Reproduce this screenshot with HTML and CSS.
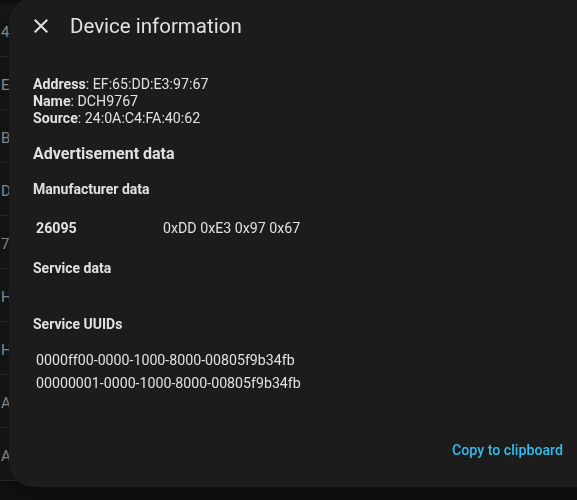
FILE: index.html
```html
<!DOCTYPE html>
<html lang="en">

<head>
    <meta charset="UTF-8">
    <meta name="viewport" content="width=device-width, initial-scale=1.0">
    <title>Device information</title>
    <link rel="stylesheet" href="styles.css">
</head>

<body>
    <div class="device-list">
        <div class="device-row">47:1C:8A:02:5E:D1</div>
        <div class="device-row">E6:02:7B:44:19:AC</div>
        <div class="device-row">B8:27:EB:11:0C:3F</div>
        <div class="device-row">D4:9A:20:6E:71:08</div>
        <div class="device-row">7C:DF:A1:B2:33:90</div>
        <div class="device-row">HB-4512</div>
        <div class="device-row">HB-7730</div>
        <div class="device-row">AM-2201</div>
        <div class="device-row">AM-3390</div>
    </div>

    <div class="dialog">
        <div class="dialog-header">
            <button class="close-button" aria-label="Close">
                <svg viewBox="0 0 24 24" width="24" height="24">
                    <path d="M19,6.41L17.59,5L12,10.59L6.41,5L5,6.41L10.59,12L5,17.59L6.41,19L12,13.41L17.59,19L19,17.59L13.41,12L19,6.41Z" fill="currentColor" />
                </svg>
            </button>
            <h2 class="dialog-title">Device information</h2>
        </div>

        <div class="dialog-content">
            <p class="device-info">
                <b>Address</b>: EF:65:DD:E3:97:67<br>
                <b>Name</b>: DCH9767<br>
                <b>Source</b>: 24:0A:C4:FA:40:62
            </p>

            <h3>Advertisement data</h3>

            <h4>Manufacturer data</h4>
            <table class="data-table">
                <tr>
                    <td class="data-key">26095</td>
                    <td>0xDD 0xE3 0x97 0x67</td>
                </tr>
            </table>

            <h4>Service data</h4>
            <table class="data-table empty"></table>

            <h4>Service UUIDs</h4>
            <ul class="uuid-list">
                <li>0000ff00-0000-1000-8000-00805f9b34fb</li>
                <li>00000001-0000-1000-8000-00805f9b34fb</li>
            </ul>
        </div>

        <div class="dialog-actions">
            <button class="text-button">Copy to clipboard</button>
        </div>
    </div>
</body>

</html>
```

FILE: styles.css
```css
body {
    font-family: Roboto, "Noto Sans", sans-serif;
    background-color: #111111;
    color: #e1e1e1;
    margin: 0;
}

/* page behind the dialog */
.device-list {
    padding-top: 4px;
}

.device-row {
    height: 52px;
    line-height: 56px;
    padding-left: 1px;
    font-size: 15px;
    color: #9c9c9c;
    background-color: #171717;
    border-bottom: 1px solid #2a2a2a;
    white-space: nowrap;
}

/* dialog */
.dialog {
    position: fixed;
    top: -2px;
    left: 9px;
    width: 592px;
    height: 489px;
    background-color: #1c1c1c;
    border-radius: 24px;
    display: flex;
    flex-direction: column;
    box-shadow: 0 8px 24px rgba(0, 0, 0, 0.4);
}

.dialog-header {
    display: flex;
    align-items: center;
    height: 56px;
    padding-left: 20px;
}

.close-button {
    display: flex;
    align-items: center;
    justify-content: center;
    width: 24px;
    height: 24px;
    padding: 0;
    border: none;
    background: none;
    color: #e1e1e1;
    cursor: pointer;
}

.dialog-title {
    margin: 0 0 0 17px;
    font-size: 20.5px;
    font-weight: 400;
    line-height: 24px;
    color: #e1e1e1;
}

.dialog-content {
    flex: 1;
    padding: 0 24px;
}

.device-info {
    margin: 22px 0 0;
    font-size: 14.2px;
    line-height: 17px;
}

.device-info b {
    font-weight: 700;
}

h3 {
    margin: 17px 0 0;
    font-size: 16px;
    font-weight: 700;
    line-height: 20px;
}

h4 {
    margin: 17px 0 0;
    font-size: 14px;
    font-weight: 700;
    line-height: 17px;
}

.data-table {
    margin-top: 16px;
    border-collapse: collapse;
    font-size: 14.2px;
}

.data-table td {
    padding: 6px 3px;
    line-height: 17px;
}

.data-table .data-key {
    width: 121px;
    font-weight: 700;
}

.data-table.empty {
    margin-top: 0;
    height: 22px;
}

.uuid-list {
    list-style: none;
    margin: 16px 0 0;
    padding: 0 0 0 3px;
    font-size: 14.2px;
    line-height: 23px;
}

.dialog-actions {
    display: flex;
    justify-content: flex-end;
    padding: 0 30px 19px 0;
}

.text-button {
    height: 36px;
    padding: 0 8px;
    border: none;
    background: none;
    font-family: Roboto, "Noto Sans", sans-serif;
    font-size: 14.2px;
    font-weight: 500;
    color: #33bdef;
    cursor: pointer;
}
```
